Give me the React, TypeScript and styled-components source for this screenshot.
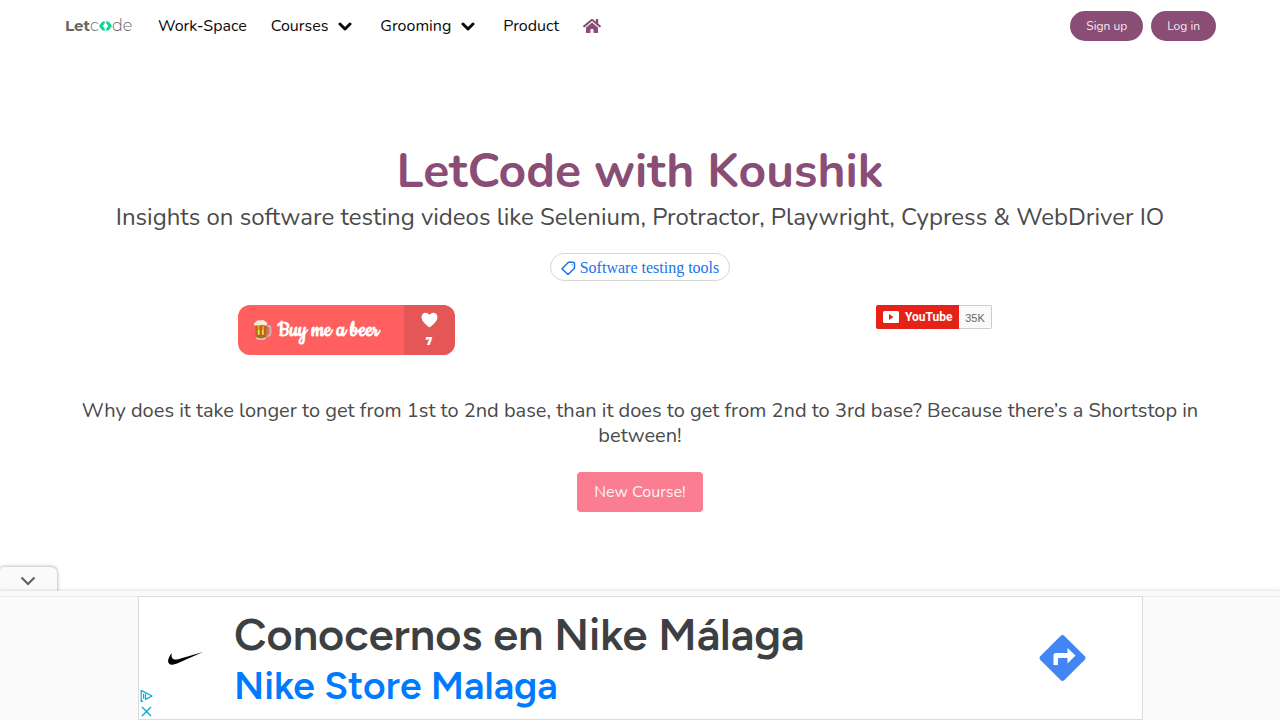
import React from "react";
import styled, { createGlobalStyle } from "styled-components";

const plum = "#8a4d76";
const rounded = `"Nunito", "Noto Sans", "Open Sans", sans-serif`;

const GlobalStyle = createGlobalStyle`
  *, *::before, *::after { box-sizing: border-box; }
  body {
    margin: 0;
    background: #fff;
    color: #4a4a4a;
    font-family: ${rounded};
    font-size: 16px;
    overflow-x: hidden;
  }
  button { font-family: inherit; cursor: pointer; }
  a { text-decoration: none; color: inherit; }
  h1, p { margin: 0; }
`;

const Page = styled.div`
  padding-bottom: 154px;
`;

const Navbar = styled.nav`
  display: flex;
  align-items: center;
  height: 52px;
  padding: 0 64px;
`;

const Logo = styled.a`
  display: flex;
  align-items: center;
  width: 94px;
  padding-left: 1px;
  font-family: Montserrat, Lato, sans-serif;
  font-size: 15px;
  line-height: 20px;
  color: #666;
`;

const LogoBold = styled.span`
  font-weight: 700;
`;

const LogoThin = styled.span`
  font-size: 16px;
  font-weight: 300;
`;

const Menu = styled.div`
  display: flex;
  flex: 1;
  align-items: center;
  gap: 24px;
`;

const MenuLink = styled.a<{ $dropdown?: boolean }>`
  display: flex;
  align-items: center;
  gap: 10px;
  padding-right: ${(p) => (p.$dropdown ? 4 : 0)}px;
  line-height: 24px;
  font-size: 16px;
  color: #0a0a0a;
  white-space: nowrap;
`;

const HomeLink = styled.a`
  display: flex;
  color: ${plum};
`;

const Actions = styled.div`
  display: flex;
  gap: 8px;
`;

const PillButton = styled.button`
  height: 30px;
  padding: 0 16px;
  border: 0;
  border-radius: 15px;
  background: ${plum};
  color: #f5e9f1;
  font-size: 12px;
  line-height: 18px;
`;

const Hero = styled.main`
  display: flex;
  flex-direction: column;
  align-items: center;
  padding: 92px 64px 0;
  text-align: center;
`;

const Title = styled.h1`
  font-size: 48px;
  line-height: 54px;
  font-weight: 700;
  color: ${plum};
`;

const Subtitle = styled.p`
  margin-top: 4px;
  font-size: 24px;
  line-height: 30px;
`;

const Tag = styled.a`
  display: flex;
  align-items: center;
  gap: 4px;
  height: 28px;
  margin-top: 21px;
  padding: 2px 10px 0;
  border: 1px solid #d7d7d7;
  border-radius: 14px;
  color: #1a73e8;
  font-family: "Liberation Serif", serif;
  font-size: 16px;
`;

const Columns = styled.div`
  display: grid;
  grid-template-columns: 1fr 1fr;
  justify-items: center;
  align-items: start;
  align-self: stretch;
  margin: 24px -12px 0;
`;

const BeerButton = styled.button`
  display: flex;
  height: 50px;
  padding: 0;
  border: 0;
  border-radius: 12px;
  overflow: hidden;
  background: #ff5f5f;
  color: #fff;
`;

const BeerLabel = styled.span`
  display: flex;
  align-items: center;
  gap: 6px;
  width: 166px;
  height: 50px;
  padding-left: 15px;
  font-family: Cookie, "Liberation Serif", cursive;
  font-size: 24px;
  font-weight: 700;
  white-space: nowrap;
`;

const BeerCount = styled.span`
  display: flex;
  flex-direction: column;
  align-items: center;
  gap: 8px;
  width: 51px;
  height: 50px;
  padding-top: 7px;
  background: #e55656;
  font-family: Montserrat, Lato, sans-serif;
  font-size: 10px;
  line-height: 12px;
  font-weight: 900;
`;

const YouTube = styled.div`
  display: flex;
  height: 24px;
  font-family: "Liberation Sans", sans-serif;
  font-size: 12px;
`;

const Subscribe = styled.button`
  display: flex;
  align-items: center;
  gap: 6px;
  width: 83px;
  padding: 0 7px;
  border: 0;
  border-radius: 2px 0 0 2px;
  background: #e62117;
  color: #fff;
  font-family: Roboto, sans-serif;
  font-size: 12px;
  font-weight: 700;

  svg { flex: none; }
`;

const Subscribers = styled.span`
  width: 33px;
  border: 1px solid #ccc;
  border-left: 0;
  border-radius: 0 2px 2px 0;
  background: #fafafa;
  color: #666;
  font-size: 11px;
  line-height: 24px;
`;

const Joke = styled.p`
  margin-top: 43px;
  font-size: 20px;
  line-height: 25px;
`;

const CourseButton = styled.button`
  height: 40px;
  margin-top: 24px;
  padding: 0 17px;
  border: 0;
  border-radius: 4px;
  background: #fb7d92;
  color: #fff3f5;
  font-size: 16px;
`;

const AdDock = styled.aside`
  position: fixed;
  left: 0;
  right: 0;
  bottom: 0;
`;

const Collapse = styled.button`
  display: flex;
  align-items: center;
  justify-content: center;
  width: 57px;
  height: 24px;
  padding: 4px 1px 0 0;
  border: 0;
  border-radius: 4px 6px 0 0;
  background: #fafafa;
  box-shadow: 0 0 3px 1px rgba(0, 0, 0, 0.25);
`;

const DockBody = styled.div`
  position: relative;
  padding-top: 5px;
  background: #fafafa;
  box-shadow: 0 -1px 3px rgba(0, 0, 0, 0.12);
`;

const AdFrame = styled.div`
  display: flex;
  justify-content: center;
  border-top: 1px solid #ededed;
`;

const Ad = styled.section`
  position: relative;
  display: flex;
  align-items: center;
  width: 1005px;
  max-width: 100%;
  height: 124px;
  margin: -1px 0 0 1px;
  padding: 0 56px 0 29px;
  border: 1px solid #dadbdd;
  background: #fff;
  font-family: Figtree, Roboto, sans-serif;
`;

const AdCopy = styled.div`
  flex: 1;
  margin-left: 30px;
  white-space: nowrap;
`;

const AdTitle = styled.a`
  display: block;
  color: #3c4043;
  font-size: 45px;
  line-height: 56px;
  font-weight: 600;
`;

const AdStore = styled(AdTitle)`
  color: #007bff;
  font-size: 39px;
  line-height: 48px;
`;

const AdControls = styled.div`
  position: absolute;
  left: 1px;
  bottom: 1px;
  display: flex;
  flex-direction: column;
  gap: 2px;
`;

const IconButton = styled.button`
  display: flex;
  padding: 0;
  border: 0;
  background: none;
`;

const Chevron = () => (
  <svg width="14" height="9" viewBox="0 0 14 9" fill="none">
    <path d="M2 2l5 5 5-5" stroke="#0a0a0a" strokeWidth="3" strokeLinecap="round" strokeLinejoin="round" />
  </svg>
);

const CodeMark = () => (
  <svg width="13" height="10" viewBox="0 0 13 10" fill="#0fd68b">
    <path d="M5.700 0v2.600L3.600 5l2.100 2.400V10Q2.800 9.800 1.700 7.400L0 5l1.700-2.400Q2.800.2 5.700 0z" />
    <path d="M7.300 0v2.600L9.400 5 7.300 7.400V10q2.900-.2 4-2.600L13 5l-1.700-2.400Q10.200.2 7.300 0z" />
  </svg>
);

const Home = () => (
  <svg width="18" height="16" viewBox="0 0 576 512" fill="currentColor">
    <path d="M280.370 148.260L96 300.110V464a16 16 0 0 0 16 16l112.060-.290a16 16 0 0 0 15.920-16V368a16 16 0 0 1 16-16h64a16 16 0 0 1 16 16v95.640a16 16 0 0 0 16 16.050L464 480a16 16 0 0 0 16-16V300L295.670 148.260a12.190 12.190 0 0 0-15.300 0zM571.600 251.470L488 182.560V44.050a12 12 0 0 0-12-12h-56a12 12 0 0 0-12 12v72.610L318.470 43a48 48 0 0 0-61 0L4.340 251.470a12 12 0 0 0-1.600 16.900l25.500 31A12 12 0 0 0 45.150 301l235.220-193.740a12.190 12.190 0 0 1 15.300 0L530.900 301a12 12 0 0 0 16.900-1.600l25.500-31a12 12 0 0 0-1.700-16.930z" />
  </svg>
);

const TagIcon = () => (
  <svg width="15" height="15" viewBox="0 0 15 15" fill="none" stroke="#1a73e8" strokeWidth="1.500" strokeLinejoin="round">
    <path d="M7.500 1.200h4.800l1.200 1.200v4.800L7 13.500 1 7.700z" />
    <circle cx="11" cy="3.800" r=".6" fill="#1a73e8" stroke="none" />
  </svg>
);

const Beer = () => (
  <svg width="19" height="22" viewBox="0 0 19 22">
    <path d="M13 7h2.500q2 0 2 2v5q0 3-4.500 3.500" fill="none" stroke="#c9b9b0" strokeWidth="1.800" />
    <path d="M2 5h12l-1 14q-5 2.500-10 0z" fill="#b8690f" />
    <path d="M4.500 7h2v8h-2zM9 7h2v8H9z" fill="#e89b24" />
    <path d="M5 11h1.500v5H5zM9 11h1.500v5H9z" fill="#ffd45c" />
    <path d="M2 5l1 14q5 2.500 10 0L14 5" fill="none" stroke="#a8795a" strokeWidth="1" />
    <path d="M1.500 6.500Q0 4.500 2 3.500 4 .8 7 1.500q3-1.200 5 .8 3 1 2 4l-2 .3-3-.5-3 .5z" fill="#f7ecdc" />
    <path d="M3 19q5 2.500 10 0" fill="none" stroke="#d8cbc4" strokeWidth="1.600" />
  </svg>
);

const Heart = () => (
  <svg width="17" height="16" viewBox="0 0 17 16" fill="#fff">
    <path d="M8.500 15.500C6 13.500.5 9.500.5 5.200.5 2.500 2.300.7 4.600.7c1.700 0 3.200.9 3.900 2.400C9.200 1.600 10.700.7 12.400.7c2.300 0 4.100 1.800 4.100 4.500 0 4.300-5.500 8.300-8 10.300z" />
  </svg>
);

const Play = () => (
  <svg width="16" height="12" viewBox="0 0 16 12">
    <rect width="16" height="12" rx="1.500" fill="#fff" />
    <path d="M6 3l4.500 3L6 9z" fill="#e62117" />
  </svg>
);

const Swoosh = () => (
  <svg width="36" height="14" viewBox="0 0 36 14">
    <path d="M35 1L9.700 12.300C7.500 13.200 5.700 13.700 4.200 13.700 2.500 13.700 1.300 13.100.6 11.900-.8 9.500 .8 5.500 4.300 1.800 3.400 3.300 2.600 7.600 6.200 8.400c1 .3 2.300.2 3.900-.2z" fill="#000" />
  </svg>
);

const Directions = () => (
  <svg width="48" height="48" viewBox="0 0 48 48">
    <path d="M22.800 1.700q1.700-1.400 3.400 0L46.800 22.300q1.400 1.700 0 3.400L26.200 46.300q-1.700 1.400-3.400 0L2.200 25.700q-1.400-1.700 0-3.400z" fill="#4285f4" />
    <path d="M15.500 31V21.500q0-2.500 2.500-2.500h11.500v-5l8 7.500-8 8V24H20v7z" fill="#fff" />
  </svg>
);

export default function App() {
  return (
    <Page>
      <GlobalStyle />
      <Navbar aria-label="Main">
        <Logo href="#" aria-label="Letcode">
          <LogoBold>Let</LogoBold>
          <LogoThin>c</LogoThin>
          <CodeMark />
          <LogoThin>de</LogoThin>
        </Logo>
        <Menu>
          <MenuLink href="#">Work-Space</MenuLink>
          <MenuLink href="#" $dropdown>Courses <Chevron /></MenuLink>
          <MenuLink href="#" $dropdown>Grooming <Chevron /></MenuLink>
          <MenuLink href="#">Product</MenuLink>
          <HomeLink href="#" aria-label="Home"><Home /></HomeLink>
        </Menu>
        <Actions>
          <PillButton>Sign up</PillButton>
          <PillButton>Log in</PillButton>
        </Actions>
      </Navbar>
      <Hero>
        <Title>LetCode with Koushik</Title>
        <Subtitle>
          Insights on software testing videos like Selenium, Protractor, Playwright, Cypress &amp; WebDriver IO
        </Subtitle>
        <Tag href="#"><TagIcon />Software testing tools</Tag>
        <Columns>
          <BeerButton>
            <BeerLabel><Beer />Buy me a beer</BeerLabel>
            <BeerCount><Heart />7</BeerCount>
          </BeerButton>
          <YouTube>
            <Subscribe><Play />YouTube</Subscribe>
            <Subscribers>35K</Subscribers>
          </YouTube>
        </Columns>
        <Joke>
          Why does it take longer to get from 1st to 2nd base, than it does to get from 2nd to 3rd base? Because there’s a Shortstop in between!
        </Joke>
        <CourseButton>New Course!</CourseButton>
      </Hero>
      <AdDock>
        <Collapse aria-label="Collapse ad">
          <svg width="16" height="10" viewBox="0 0 16 10" fill="none">
            <path d="M1.500 1.500L8 8l6.500-6.500" stroke="#616161" strokeWidth="2.200" />
          </svg>
        </Collapse>
        <DockBody>
          <AdFrame>
            <Ad>
              <Swoosh />
              <AdCopy>
                <AdTitle href="#">Conocernos en Nike Málaga</AdTitle>
                <AdStore href="#">Nike Store Malaga</AdStore>
              </AdCopy>
              <Directions />
              <AdControls>
                <IconButton aria-label="Ad choices">
                  <svg width="13" height="14" viewBox="0 0 13 14" fill="none" stroke="#00aecd" strokeWidth="1.200" strokeLinejoin="round">
                    <path d="M3.200 11.800L1.200 12.600V1.400L12 7 5.500 10.400V4.800M3.600 4.800v5" />
                  </svg>
                </IconButton>
                <IconButton aria-label="Close ad">
                  <svg width="13" height="13" viewBox="0 0 13 13" stroke="#00aecd" strokeWidth="1.400">
                    <path d="M2 2l9 9M11 2l-9 9" />
                  </svg>
                </IconButton>
              </AdControls>
            </Ad>
          </AdFrame>
        </DockBody>
      </AdDock>
    </Page>
  );
}
